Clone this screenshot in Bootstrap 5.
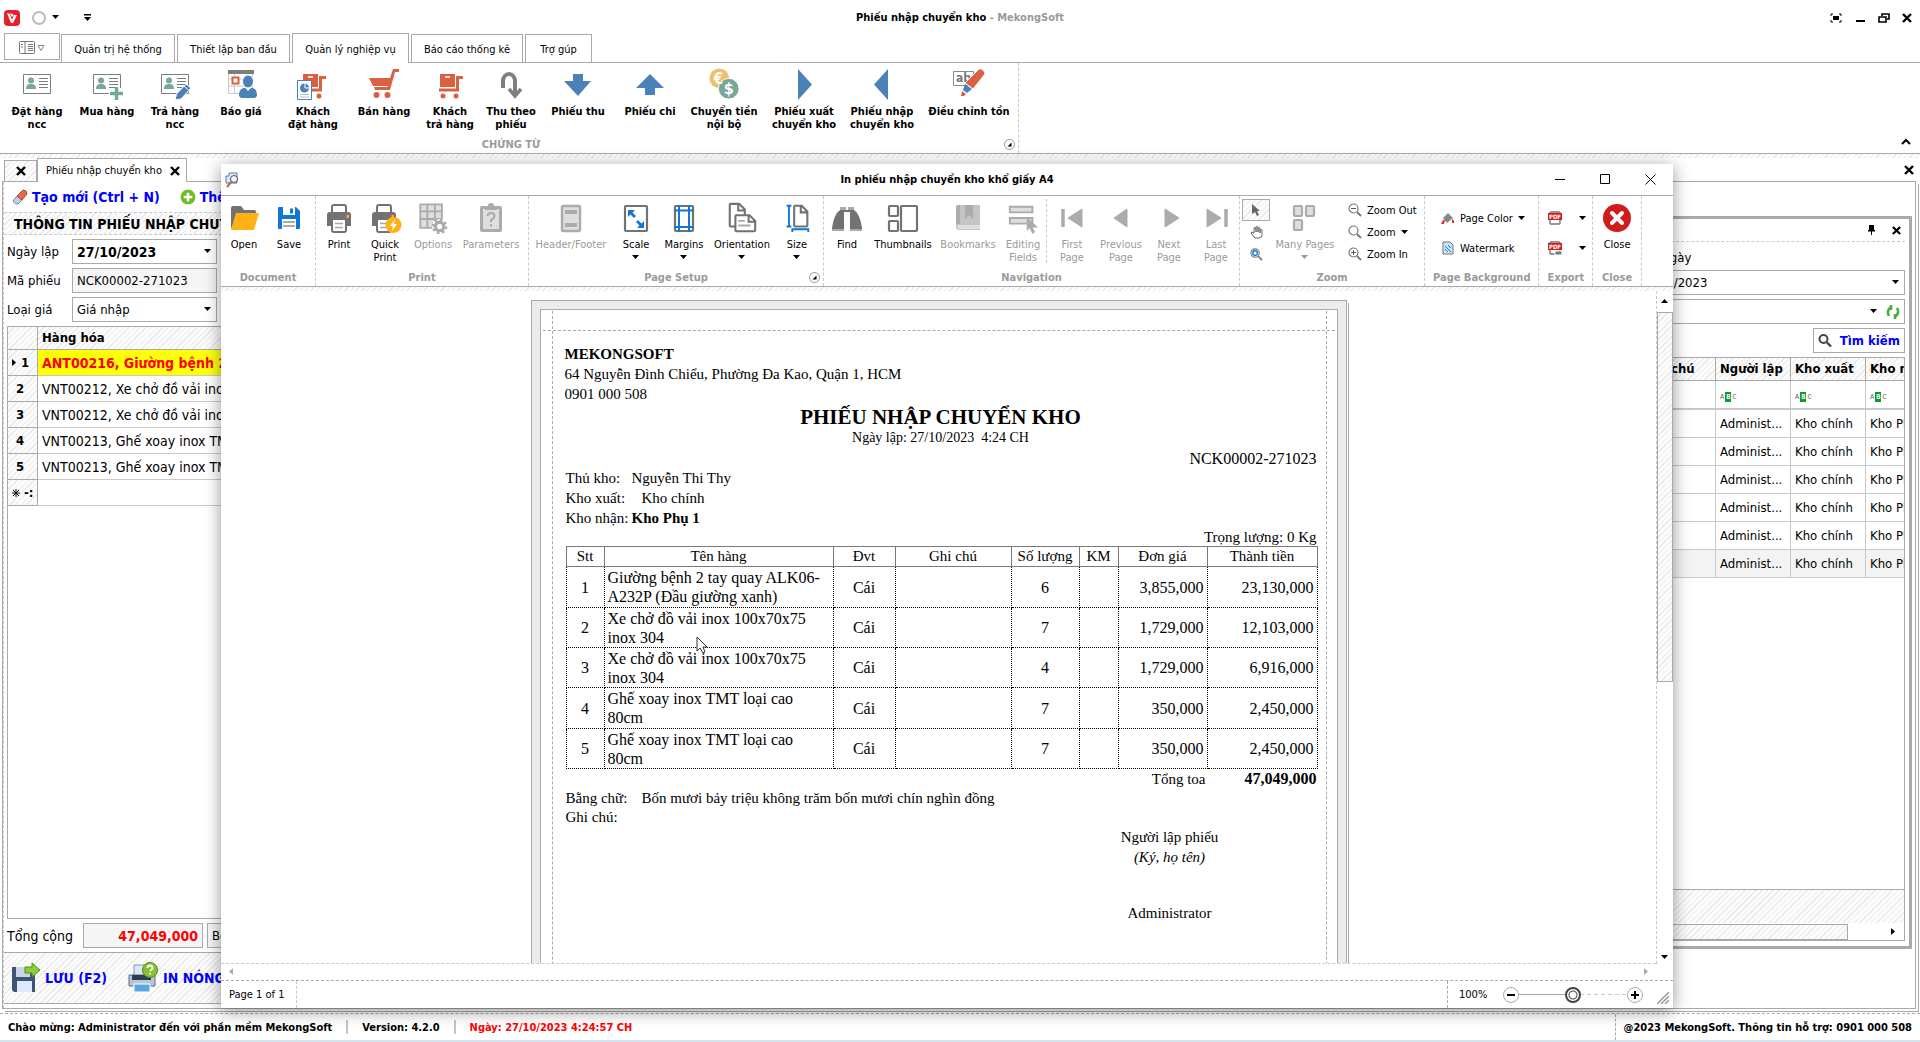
<!DOCTYPE html>
<html lang="vi">
<head>
<meta charset="utf-8">
<meta name="viewport" content="width=device-width, initial-scale=1">
<title>Phiếu nhập chuyển kho - MekongSoft</title>
<link href="https://cdn.jsdelivr.net/npm/bootstrap@5.3.0/dist/css/bootstrap.min.css" rel="stylesheet">
<style>
:root{--ln:#a9a9a9;--dash:#c9c9c9;--off:#9a9a9a;--hatch:repeating-linear-gradient(-45deg,#fcfcfc 0 3px,#e9e9e9 3px 4px)}
body{font-family:"DejaVu Sans Condensed","Noto Sans",sans-serif;font-size:11px;line-height:13px;color:#000;background:#fff;overflow:hidden}
button{font:inherit;color:inherit;background:none;border:0;padding:0}
svg{display:block;flex:none}
input,select{font:inherit;color:inherit}
.fs13{font-size:13px;line-height:16px}
.fs14{font-size:14px;line-height:16px}
.blue{color:#00f}.red{color:#f00}
.hatch{background:var(--hatch)}
.bx{border:1px solid var(--ln)}
.dim{color:var(--off)}
.dashR{border-right:1px dashed var(--dash)}
.strip5{height:4px;flex:none}
/* main window */
.topbar{height:32px;padding-top:3px}
.tabrow{height:31px;border-bottom:1px solid var(--ln)}
.tabrow button{height:28px;border:1px solid var(--ln);border-bottom:0;margin-right:2px;padding-top:2px}
.tabrow .appbtn{height:27px;width:56px;border-bottom:1px solid var(--ln);margin-bottom:2px;margin-right:1px}
.tabrow .cur{height:30px;margin-bottom:-1px;background:#fff;position:relative}
.ribbon{height:91px;border-bottom:1px solid var(--ln)}
.rb{display:flex;flex-direction:column;align-items:center;text-align:center;padding-top:5px;flex:none}
.rb svg{margin-bottom:5px}
.cap{font-weight:700;color:var(--off);text-align:center;height:15px;position:relative}
.launch{position:absolute;right:3px;top:1px}
.w44{width:44px}.w46{width:46px}.w48{width:48px}.w50{width:50px}.w58{width:58px}.w62{width:62px}.w64{width:64px}.w66{width:66px}.w68{width:68px}.w70{width:70px}.w74{width:74px}.w76{width:76px}.w80{width:80px}.w84{width:84px}.w98{width:98px}.w28{width:28px}
.docs{height:23px}
.doctab{border:1px solid var(--ln);border-bottom:0}
.doctab.one{width:33px;height:21px}
.doctab.two{width:150px;height:24px;margin-bottom:-1px;background:#fff;z-index:1;padding:0 6px 0 8px}
.closeall{padding:0 6px 6px 0}
.desk{margin:0 4px 33px 2px;border:1px solid var(--ln);box-shadow:2px 2px 0 #fff,3px 3px 0 var(--ln)}
.leftpane{border-left:1px dashed var(--dash)}
.tools{height:30px}
.sect{height:23px;border-top:1px dashed var(--dash);border-bottom:1px dashed var(--dash);padding-left:10px;font-weight:700}
.inset{margin-left:3px}
.frow{height:25px;margin-bottom:4px}
.frow label{width:65px}
.ctl{height:25px;border:1px solid var(--ln);border-radius:0;background:#fff;padding:0 4px;outline:0;appearance:none;min-width:0}
.w145{width:145px}
.ctl.ro{background:#f5f5f5}
.caret{position:absolute;right:5px;top:10px;pointer-events:none}
table{border-collapse:separate;border-spacing:0;table-layout:fixed;width:100%}
.lgrid{border:1px solid var(--ln)}
.lgrid td,.lgrid th{height:26px;padding:0 4px;border-bottom:1px solid var(--dash);white-space:nowrap;overflow:hidden}
.lgrid td{font-size:14px}
.lgrid thead th{height:23px;background:var(--hatch);border-bottom:1px solid var(--ln)}
.lgrid .no{background:var(--hatch);border-right:1px solid var(--ln);border-bottom:1px solid var(--ln);font-weight:700;font-size:13px}
.lgrid .hot{background:linear-gradient(90deg,#ff0,#ffff70);color:#f00;font-weight:700}
.sumrow{margin:4px 0 4px 3px}
.btm{height:52px;flex:none;border-top:1px solid var(--ln);border-bottom:1px solid var(--ln);margin-left:-1px;margin-bottom:4px}
.rightpane{width:554px;margin:34px 3px 59px 0;border:3px solid var(--ln);background:#fff;padding:0 4px 5px}
.rhead{height:23px;border-bottom:1px dashed var(--dash)}
.rgrid{border:1px solid var(--ln)}
.rgrid td,.rgrid th{height:28px;padding:0 4px;border-right:1px solid var(--dash);border-bottom:1px solid var(--dash);white-space:nowrap;overflow:hidden}
.rgrid th{height:23px;background:var(--hatch);border-color:var(--ln)}
.rgrid .flt td{border-bottom:2px solid var(--dash);height:29px}
.rgrid td:last-child,.rgrid th:last-child{border-right:0;padding-right:0}
.rgrid .alt td{background:#f3f3f3}
.abc{font:7px/9px "Liberation Mono",monospace;color:#666}
.abc b{background:#0a9a2a;color:#fff;padding:1px;margin:0 1px}
.status{height:27px;border-top:1px dashed var(--ln);font-weight:700}
.status i{width:2px;height:14px;background:linear-gradient(90deg,#a9c7e0 50%,#d8c8a9 50%);margin:0 14px}
.edge{height:2px;background:#d3e4ed}
/* preview window */
.preview{position:absolute;left:221px;right:247px;top:164px;bottom:34px;background:#fff;box-shadow:0 3px 16px rgba(0,0,0,.42);z-index:5}
.ptitle{height:32px;flex:none;border-bottom:1px solid var(--ln)}
.ptb{gap:34px;padding-right:17px}
.pribbon{height:91px;flex:none;border-bottom:1px solid var(--ln)}
.pg{display:flex;flex-direction:column;justify-content:space-between;padding-top:3px}
.pg .rb{padding-top:3px}
.pg .rb svg.ic{margin-bottom:4px}
.sm{height:22px;display:flex;align-items:center;gap:5px}
.sm.pick{border:1px solid var(--ln);justify-content:center}
.zcol{padding-left:2px}
.navsep{height:64px}
.pbody{flex:1 1 0;min-height:0}
.canvas{border-bottom:1px dashed var(--dash);overflow:hidden}
.mat{width:816px;margin:9px auto 0;height:1200px;border:1px solid var(--ln);background:#ececec;padding:8px;box-shadow:1px 2px 0 #fff,2px 3px 0 var(--ln)}
.paper{position:relative;height:100%;background:#fff;border:1px solid var(--ln);padding:34px 20px 0 24px;font-family:"Liberation Serif",serif;font-size:15px;line-height:20px}
.paper:before{content:"";position:absolute;inset:1px 10px 0 11px;border-left:1px dashed var(--ln);border-right:1px dashed var(--ln)}
.paper:after{content:"";position:absolute;left:2px;right:2px;top:20px;border-top:1px dashed var(--ln)}
.paper p{margin:0}
.t21{font-size:21px;line-height:26px}
.paper .t14{font-size:14px;line-height:16px}
.t16{font-size:16px;line-height:19px}
.docno{padding-top:3px}
.weight{line-height:18px}
.info{margin-left:1px}
.words{line-height:19px}
.info dt{font-weight:400;width:66px}
.info dt.wide{width:76px}
.info dd{margin:0}
.bill{width:751px;margin-left:1px;font-size:16px;line-height:19px;border-collapse:collapse}
.bill th{font-weight:400;font-size:15px;height:20px;line-height:19px;border:1px solid #7a7a7a;text-align:center;padding:0}
.bill td{border:1px dotted #000;height:40px;text-align:center;padding:0 3px}
.bill tbody tr:nth-child(3n+1) td{height:41px}
.bill td:nth-child(2){text-align:left}
.bill td:nth-child(n+7){text-align:right}
.sign{width:200px;margin-left:505px;text-align:center}
.signgap{height:36px}
.sumk{width:641px}
.vbar{width:17px;border-left:1px dashed var(--dash)}
.vthumb{height:370px;border:1px solid var(--ln);background:var(--hatch);margin-left:-1px}
.hbar{height:17px;flex:none;border-bottom:1px dashed var(--ln)}
.pstat{height:27px;flex:none}
.zlab{width:47px;padding-left:3px}
.grip{margin:0 4px 4px 14px}
.zoomr{appearance:none;width:108px;height:16px;background:none;margin:0}
.zoomr::-webkit-slider-runnable-track{height:16px;background:linear-gradient(var(--ln),var(--ln)) 0 50%/50% 1px no-repeat,repeating-linear-gradient(90deg,var(--dash) 0 4px,#fff 4px 7px) 100% 50%/50% 1px no-repeat}
.zoomr::-webkit-slider-thumb{appearance:none;width:16px;height:16px;border-radius:50%;border:2px solid #444;background:radial-gradient(circle,#fff 3px,#444 4px,#fff 5px)}
.round{width:16px;height:16px;border:1px solid #aaa;border-radius:50%;background:#fff;display:flex;align-items:center;justify-content:center}
.cursor{position:absolute;left:475px;top:472px;z-index:6}
</style>
</head>
<body>
<svg width="0" height="0" class="position-absolute">
<defs>
<symbol id="dn" viewBox="0 0 8 5"><path d="M0 0h7L3.500 4z"/></symbol>
<symbol id="up" viewBox="0 0 8 5"><path d="M0 4h7L3.500 0z"/></symbol>
<symbol id="rt" viewBox="0 0 5 8"><path d="M0 0v7l4-3.500z"/></symbol>
<symbol id="lf" viewBox="0 0 5 8"><path d="M4 0v7L0 3.500z"/></symbol>
<symbol id="xx" viewBox="0 0 10 10"><path d="M1 1l8 8M9 1l-8 8" stroke="#000" stroke-width="2.400"/></symbol>
<symbol id="lau" viewBox="0 0 11 11"><circle cx="5.500" cy="5.500" r="5" fill="#fff" stroke="#999"/><path d="M3.500 7.500h4v-4z"/></symbol>
<symbol id="card1" viewBox="0 0 32 32"><path d="M2.500 6.500h27v19h-27z" fill="#fff" stroke="#7d7d7d"/><circle cx="10" cy="12.500" r="3" fill="#77a797"/><path d="M5 21c0-4 2-5 5-5s5 1 5 5z" fill="#77a797"/><path d="M18 10.500h9M18 13.500h9M18 16.500h9M18 19.500h9" stroke="#7d7d7d"/></symbol>
<symbol id="card2" viewBox="0 0 32 32"><use href="#card1" width="32" height="32"/><path d="M18 20h14v12H18z" fill="#fff"/><path d="M25.500 19v13M19 25.500h13" stroke="#77a797" stroke-width="3.500"/></symbol>
<symbol id="card3" viewBox="0 0 32 32"><use href="#card1" width="32" height="32"/><path d="M16 32l1.500-6L27 16l5 4-10 11z" fill="#4a81b8" stroke="#fff"/><path d="M25 18l4.500 4" stroke="#fff"/></symbol>
<symbol id="quote" viewBox="0 0 32 32"><path d="M3.500 4.500h24v21h-24zM3.500 11h24M3.500 18h24M9.500 4v22M21.500 4v22" fill="#fff" stroke="#c8c8c8"/><path d="M3 2h26v4H3z" fill="#7d7d7d"/><path d="M7.500 9.500h6v6h-6z" fill="#fff" stroke="#d96041" stroke-width="2"/><ellipse cx="23" cy="13.500" rx="5.500" ry="6.500" fill="#4a81b8" stroke="#fff"/><path d="M14 28c0-7 3-8 6-8l3 3 3-3c3 0 6 1 6 8l-2 2H16z" fill="#4a81b8"/></symbol>
<symbol id="cart" viewBox="0 0 32 32"><path d="M1 10h21l3-9h6v3h-4l-5 18H7l-1-3h13l1-1H5z" fill="#d96041"/><circle cx="8.500" cy="27" r="3" fill="#d96041"/><circle cx="19.500" cy="27" r="3" fill="#d96041"/></symbol>
<symbol id="truck" viewBox="0 0 32 32"><path d="M6 6h15v13H6z" fill="#d96041"/><path d="M11 9h5" stroke="#fff" stroke-width="1.500"/><path d="M5 22h18.500V9.500H29" fill="none" stroke="#d96041" stroke-width="3"/><circle cx="9" cy="28" r="2.500" fill="#d96041"/><circle cx="22" cy="28" r="2.500" fill="#d96041"/></symbol>
<symbol id="order" viewBox="0 0 32 32"><use href="#truck" width="32" height="32"/><path d="M.5 12.500h14v19H.5z" fill="#fff" stroke="#4a81b8"/><circle cx="7.500" cy="20" r="4.500" fill="#4a81b8"/><path d="M8 15v5h5" fill="none" stroke="#fff"/><path d="M3 26.500h9M3 29h9" stroke="#bbb"/></symbol>
<symbol id="turn" viewBox="0 0 32 32"><path d="M8 20v-7a6 7 0 0 1 12 0v13" fill="none" stroke="#808080" stroke-width="4"/><path d="M14 21l6 7 6-7" fill="none" stroke="#808080" stroke-width="3.500"/></symbol>
<symbol id="adn" viewBox="0 0 32 32"><path d="M11 6h10v7h8L16 28 2 13h9z" fill="#4a81b8"/></symbol>
<symbol id="aup" viewBox="0 0 32 32"><path d="M11 27h10v-7h9L16 6 2 20h9z" fill="#4a81b8"/></symbol>
<symbol id="art" viewBox="0 0 32 32"><path d="M10 1v31l14-15.500z" fill="#4a81b8"/></symbol>
<symbol id="alf" viewBox="0 0 32 32"><path d="M22 1v31L8 16.500z" fill="#4a81b8"/></symbol>
<symbol id="coins" viewBox="0 0 34 34"><circle cx="12" cy="11" r="10.500" fill="#ecc16b"/><circle cx="22" cy="22" r="11" fill="#77a797" stroke="#fff"/><text x="11" y="17" font-size="16" font-weight="700" fill="#fff" text-anchor="middle">€</text><text x="22" y="28" font-size="17" font-weight="700" fill="#fff" text-anchor="middle">$</text></symbol>
<symbol id="mark1" viewBox="0 0 32 32"><path d="M.5 3.500h20v14H.5z" fill="#fff" stroke="#888"/><text x="3" y="14" font-size="12" fill="#777">ab</text><path d="M26 1c2-1 6 2 6 5L20 21l-8-6z" fill="#d96041" stroke="#fff"/><path d="M12 16l7 5-5 4-4-3z" fill="#4a81b8"/><path d="M9 23l4 3-2 2H8z" fill="#d96041"/></symbol>
<!-- preview ribbon -->
<symbol id="open" viewBox="0 0 32 32"><path d="M3 27V6q0-2 2-2h8l3 4h10q2 0 2 2v3H9z" fill="#727272"/><path d="M8 11h23l-5 17H3z" fill="#ffb115"/></symbol>
<symbol id="save" viewBox="0 0 32 32"><path d="M5 6q0-1 1-1h17l4 4v17q0 1-1 1H5z" fill="#1177d7"/><path d="M10 5h12v8H10zM9 17h14v10H9z" fill="#fff"/><path d="M17 6.500h3v5h-3z" fill="#1177d7"/><path d="M10 20h12M10 24h12" stroke="#a9a9a9" stroke-width="2"/></symbol>
<symbol id="print" viewBox="0 0 32 32"><path d="M4 24V13q0-3 3-3h18q3 0 3 3v11z" fill="#727272"/><path d="M9 11V5q0-2 2-2h10q2 0 2 2v6zM9 17h14v11q0 2-2 2H11q-2 0-2-2z" fill="#fff" stroke="#727272" stroke-width="2"/><path d="M12 21.500h8M12 25.500h8" stroke="#a9a9a9" stroke-width="1.500"/><path d="M23.500 13h2.500v3h-2.500z" fill="#ffb115"/></symbol>
<symbol id="qprint" viewBox="0 0 34 32"><use href="#print" width="32" height="32"/><circle cx="25.500" cy="23" r="8" fill="#ffb115"/><path d="M27 17l-5 7h3l-1 5 5-7h-3z" fill="#fff"/></symbol>
<symbol id="opts" viewBox="0 0 32 34"><path d="M2.500 2.500h23v25h-23zM2 10h24M2 18h24M10 2v26M18 2v26" fill="#dedede" stroke="#ababab" stroke-width="2"/><circle cx="23" cy="26" r="8" fill="#fff"/><circle cx="23" cy="26" r="4.500" fill="#fff" stroke="#ababab" stroke-width="3.500"/><circle cx="23" cy="26" r="7" fill="none" stroke="#ababab" stroke-width="2.500" stroke-dasharray="2.700 2.800"/></symbol>
<symbol id="parm" viewBox="0 0 32 32"><path d="M7 4h18q2 0 2 2v22q0 2-2 2H7q-2 0-2-2V6q0-2 2-2z" fill="#ababab"/><path d="M8 7h16v20H8z" fill="#dedede"/><path d="M10 8V4h3q0-3 3-3t3 3h3v4z" fill="#ababab"/><path d="M12.500 14q0-3 3.500-3t3.500 3q0 2-3.500 4v2M16 22v2.500" fill="none" stroke="#ababab" stroke-width="2"/></symbol>
<symbol id="hf" viewBox="0 0 32 32"><rect x="7" y="4" width="18" height="25" rx="1" fill="#dedede" stroke="#ababab" stroke-width="2.400"/><path d="M10 10h12M10 23h12" stroke="#ababab" stroke-width="4"/></symbol>
<symbol id="scale" viewBox="0 0 32 32"><rect x="5" y="4" width="22" height="25" rx="1" fill="#fff" stroke="#727272" stroke-width="2.200"/><path d="M8 8h7l-2.500 2.500L16 14l-2 2-3.500-3.500L8 15zM24 26h-7l2.500-2.500L16 20l2-2 3.500 3.500L24 19z" fill="#1177d7"/></symbol>
<symbol id="marg" viewBox="0 0 32 32"><rect x="7" y="4" width="18" height="25" rx="1" fill="#fff" stroke="#727272" stroke-width="2.200"/><path d="M11 3v27M21 3v27M6 8.500h20M6 25h20" stroke="#1177d7" stroke-width="2" fill="none"/></symbol>
<symbol id="orient" viewBox="0 0 32 34"><path d="M3 25V3q0-1 1-1h9l6 6v17q0 1-1 1H4q-1 0-1-1zM12 2v7h7" fill="#fff" stroke="#727272" stroke-width="2.200"/><path d="M9 30V15q0-1 1-1h14l6 6v10q0 1-1 1H10q-1 0-1-1zM23 14v7h7" fill="#fff" stroke="#727272" stroke-width="2.200"/><path d="M12 20h7M12 25h13" stroke="#a9a9a9" stroke-width="2"/></symbol>
<symbol id="size" viewBox="0 0 32 34"><path d="M5 4h5M5 26h5M7.500 4v22M11 32v-3h17v3" fill="none" stroke="#1177d7" stroke-width="2"/><path d="M13 25V5q0-1 1-1h7l6 6v15q0 1-1 1H14q-1 0-1-1zM20 4v7h7" fill="#fff" stroke="#727272" stroke-width="2.200"/></symbol>
<symbol id="find" viewBox="0 0 32 32"><path d="M9 5h6v3h2V5h6v3q6 4 8 18v3H19V10h-6v19H1v-3Q3 12 9 8z" fill="#727272"/><path d="M9 5h6v3H9zM17 5h6v3h-6zM1 27h12v2H1zM19 27h12v2H19z" fill="#a9a9a9"/></symbol>
<symbol id="thumb" viewBox="0 0 32 32"><rect x="2" y="4" width="9" height="10" rx="1" fill="#fff" stroke="#727272" stroke-width="2.200"/><rect x="2" y="19" width="9" height="10" rx="1" fill="#fff" stroke="#727272" stroke-width="2.200"/><rect x="14" y="4" width="16" height="25" rx="1" fill="#fff" stroke="#727272" stroke-width="2.200"/></symbol>
<symbol id="book" viewBox="0 0 32 32"><path d="M4 5q0-2 2-2h22v25H7q-3 0-3-3z" fill="#c4c4c4"/><path d="M4 5q0-2 2-2h2v19H4zM13 3h8v14l-4-4-4 4z" fill="#ababab"/><path d="M6 23h22v4H7q-2-2-1-4z" fill="#dedede"/></symbol>
<symbol id="edit" viewBox="0 0 32 34"><path d="M2 5h24v6H2zM2 17h24v6H2z" fill="#dedede" stroke="#ababab" stroke-width="2"/><path d="M20 16l12 11h-6l3 5-3 2-3-6-3 3z" fill="#ababab"/></symbol>
<symbol id="first" viewBox="0 0 32 32"><path d="M26 7v18L12 16z" fill="#ababab" stroke="#ababab" stroke-linejoin="round"/><path d="M7 7v18" stroke="#ababab" stroke-width="3.500"/></symbol>
<symbol id="prev" viewBox="0 0 32 32"><path d="M22 7v18L9 16z" fill="#ababab" stroke="#ababab" stroke-linejoin="round"/></symbol>
<symbol id="next" viewBox="0 0 32 32"><path d="M12 7v18l14-9z" fill="#ababab" stroke="#ababab" stroke-linejoin="round"/></symbol>
<symbol id="last" viewBox="0 0 32 32"><path d="M7 7v18l14-9z" fill="#ababab" stroke="#ababab" stroke-linejoin="round"/><path d="M26 7v18" stroke="#ababab" stroke-width="3.500"/></symbol>
<symbol id="many" viewBox="0 0 32 32"><g fill="#dedede" stroke="#ababab" stroke-width="2.200"><rect x="5" y="4" width="8" height="10" rx="1"/><rect x="17" y="4" width="8" height="10" rx="1"/><rect x="5" y="18" width="8" height="10" rx="1"/></g></symbol>
<symbol id="mag" viewBox="0 0 14 14"><circle cx="5.500" cy="5.500" r="4.500" fill="#fff" stroke="#777" stroke-width="1.200"/><path d="M9 9l4 4" stroke="#777" stroke-width="1.800"/></symbol>
<symbol id="closer" viewBox="0 0 32 32"><circle cx="16" cy="16" r="14" fill="#d11c1c"/><path d="M11 11l10 10M21 11L11 21" stroke="#fff" stroke-width="4" stroke-linecap="round"/></symbol>
<symbol id="pdf" viewBox="0 0 16 16"><rect x="3" y="2" width="10" height="12" rx="1" fill="#fff" stroke="#777" stroke-width="1.400"/><path d="M1 3h14v7H1z" fill="#d11c1c"/><text x="8" y="9" font-size="6" font-weight="700" fill="#fff" text-anchor="middle">PDF</text></symbol>
</defs>
</svg>

<div class="vh-100 d-flex flex-column">
<header>
  <div class="topbar d-flex align-items-center position-relative">
    <svg class="ms-1" width="16" height="16" viewBox="0 0 16 16"><rect width="16" height="16" rx="4" fill="#e8202a"/><path d="M3 3l3 1 2 6 2-5h3l-4 8H7z" fill="#fff"/><path d="M6 3l4 2-2 2z" fill="#fff"/></svg>
    <svg class="ms-2" width="20" height="14" viewBox="0 0 20 14"><circle cx="11" cy="7" r="6" fill="none" stroke="#bbb" stroke-width="2"/></svg>
    <svg class="ms-1" width="8" height="5"><use href="#dn"/></svg>
    <svg class="ms-4" width="8" height="8" viewBox="0 0 8 8"><path d="M0 0h7v1.500H0zM0 3h7L3.500 7z"/></svg>
    <div class="position-absolute start-50 translate-middle-x fw-bold text-nowrap">Phiếu nhập chuyển kho <span class="dim">- MekongSoft</span></div>
    <div class="ms-auto d-flex align-items-center gap-2 pe-2">
      <button aria-label="Toàn màn hình"><svg width="12" height="10" viewBox="0 0 12 10"><path d="M1 3V1h2M9 1h2v2M11 7v2H9M3 9H1V7" fill="none" stroke="#000"/><path d="M3 3h6v4H3z"/></svg></button>
      <button aria-label="Thu nhỏ" class="ms-1"><svg width="12" height="10" viewBox="0 0 12 10"><path d="M2 8h9" stroke="#000" stroke-width="2"/></svg></button>
      <button aria-label="Khôi phục" class="ms-1"><svg width="12" height="10" viewBox="0 0 12 10"><path d="M4 3V1h7v5H9" fill="none" stroke="#000" stroke-width="1.600"/><path d="M1 4h7v5H1z" fill="none" stroke="#000" stroke-width="1.600"/></svg></button>
      <button aria-label="Đóng" class="ms-1"><svg width="10" height="10"><use href="#xx"/></svg></button>
    </div>
  </div>
  <nav class="tabrow d-flex align-items-end ps-1">
    <button class="appbtn d-flex align-items-center justify-content-center" aria-label="Menu"><svg width="26" height="14" viewBox="0 0 26 14"><rect x=".5" y=".5" width="15" height="12" rx="1" fill="#fff" stroke="#777"/><path d="M6 0v13M9 3.500h5M9 5.500h5M9 7.500h5M9 9.500h5M2 3.500h2M2 6h2" stroke="#777"/><path d="M19 4.500h6l-3 5z" fill="#fff" stroke="#888"/></svg></button>
    <button style="width:114px">Quản trị hệ thống</button>
    <button style="width:113px">Thiết lập ban đầu</button>
    <button class="cur" style="width:117px">Quản lý nghiệp vụ</button>
    <button style="width:112px">Báo cáo thống kê</button>
    <button style="width:67px">Trợ gúp</button>
  </nav>
  <div class="ribbon d-flex">
    <div class="d-flex flex-column justify-content-between dashR ps-1">
      <div class="d-flex fw-bold">
        <button class="rb w66"><svg width="32" height="32"><use href="#card1"/></svg>Đặt hàng<br>ncc</button>
        <button class="rb w74"><svg width="32" height="32"><use href="#card2"/></svg>Mua hàng</button>
        <button class="rb w62"><svg width="32" height="32"><use href="#card3"/></svg>Trả hàng<br>ncc</button>
        <button class="rb w70"><svg width="32" height="32"><use href="#quote"/></svg>Báo giá</button>
        <button class="rb w74"><svg width="32" height="32"><use href="#order"/></svg>Khách<br>đặt hàng</button>
        <button class="rb w68"><svg width="32" height="32"><use href="#cart"/></svg>Bán hàng</button>
        <button class="rb w64"><svg width="32" height="32"><use href="#truck"/></svg>Khách<br>trả hàng</button>
        <button class="rb w58"><svg width="32" height="32"><use href="#turn"/></svg>Thu theo<br>phiếu</button>
        <button class="rb w76"><svg width="32" height="32"><use href="#adn"/></svg>Phiếu thu</button>
        <button class="rb w68"><svg width="32" height="32"><use href="#aup"/></svg>Phiếu chi</button>
        <button class="rb w80"><svg width="32" height="32"><use href="#coins"/></svg>Chuyển tiền<br>nội bộ</button>
        <button class="rb w80"><svg width="32" height="32"><use href="#art"/></svg>Phiếu xuất<br>chuyển kho</button>
        <button class="rb w76"><svg width="32" height="32"><use href="#alf"/></svg>Phiếu nhập<br>chuyển kho</button>
        <button class="rb w98"><svg width="32" height="32"><use href="#mark1"/></svg>Điều chỉnh tồn</button>
      </div>
      <div class="cap">CHỨNG TỪ<button class="launch" aria-label="Tùy chọn"><svg width="11" height="11"><use href="#lau"/></svg></button></div>
    </div>
    <button class="ms-auto align-self-end me-2 mb-2" aria-label="Thu gọn"><svg width="12" height="7" viewBox="0 0 12 7"><path d="M2 6l4-4 4 4" fill="none" stroke="#000" stroke-width="2"/></svg></button>
  </div>
</header>
<div class="strip5 hatch"></div>
<div class="docs d-flex align-items-end ps-1">
  <div class="doctab one hatch d-flex align-items-center justify-content-center"><button aria-label="Đóng"><svg width="10" height="10"><use href="#xx"/></svg></button></div>
  <div class="doctab two d-flex align-items-center justify-content-between text-nowrap">Phiếu nhập chuyển kho<button aria-label="Đóng tab"><svg width="10" height="10"><use href="#xx"/></svg></button></div>
  <button class="closeall ms-auto" aria-label="Đóng trang"><svg width="10" height="10"><use href="#xx"/></svg></button>
</div>
<main class="desk flex-grow-1 d-flex fs13 overflow-visible">
  <section class="leftpane flex-grow-1 d-flex flex-column overflow-hidden">
    <div class="tools d-flex align-items-center fw-bold blue text-nowrap fs14">
      <button class="d-flex align-items-center gap-1 ps-2 pe-2 me-1"><svg width="16" height="16" viewBox="0 0 16 16"><path d="M1 12l4-5 5 4-4 4q-3 1-5-3z" fill="#bcd3ea" stroke="#6d87a8"/><path d="M5 7l6-6q4 0 4 4l-5 6z" fill="#e36a4a" stroke="#a34c3c"/></svg>Tạo mới (Ctrl + N)</button>
      <button class="d-flex align-items-center gap-1 ps-2"><svg width="16" height="16" viewBox="0 0 15 15"><circle cx="7.500" cy="7.500" r="7" fill="#6cbf26"/><path d="M7.500 3.500v8M3.500 7.500h8" stroke="#fff" stroke-width="2.400"/></svg>Thêm hàng</button>
    </div>
    <div class="sect hatch d-flex align-items-center text-nowrap fs14">THÔNG TIN PHIẾU NHẬP CHUYỂN KHO</div>
    <div class="inset pt-1">
      <div class="frow d-flex align-items-center"><label for="d1">Ngày lập</label><div class="position-relative"><input id="d1" class="ctl w145 fw-bold fs14" value="27/10/2023"><svg class="caret" width="8" height="5"><use href="#dn"/></svg></div></div>
      <div class="frow d-flex align-items-center"><label for="d2">Mã phiếu</label><input id="d2" class="ctl ro w145" value="NCK00002-271023" readonly></div>
      <div class="frow d-flex align-items-center"><label for="d3">Loại giá</label><div class="position-relative"><select id="d3" class="ctl w145"><option>Giá nhập</option></select><svg class="caret" width="8" height="5"><use href="#dn"/></svg></div></div>
    </div>
    <div class="lgrid flex-grow-1 inset overflow-hidden">
      <table>
        <colgroup><col style="width:30px"><col></colgroup>
        <thead><tr><th class="no"></th><th>Hàng hóa</th></tr></thead>
        <tbody>
          <tr><td class="no"><div class="d-flex align-items-center gap-1"><svg width="5" height="8"><use href="#rt"/></svg>1</div></td><td class="hot">ANT00216, Giường bệnh 2 tay quay ALK06-A232P</td></tr>
          <tr><td class="no ps-2">2</td><td>VNT00212, Xe chở đồ vải inox 100x70x75 inox 304</td></tr>
          <tr><td class="no ps-2">3</td><td>VNT00212, Xe chở đồ vải inox 100x70x75 inox 304</td></tr>
          <tr><td class="no ps-2">4</td><td>VNT00213, Ghế xoay inox TMT loại cao 80cm</td></tr>
          <tr><td class="no ps-2">5</td><td>VNT00213, Ghế xoay inox TMT loại cao 80cm</td></tr>
          <tr><td class="no"><div class="d-flex align-items-center gap-1"><svg width="8" height="8" viewBox="0 0 8 8"><path d="M4 0v8M0 4h8M1 1l6 6M7 1L1 7" stroke="#000"/></svg>-:</div></td><td></td></tr>
        </tbody>
      </table>
    </div>
    <div class="sumrow d-flex align-items-center text-nowrap">
      <label for="sum" class="w76 fs14">Tổng cộng</label>
      <input id="sum" class="ctl ro fw-bold red text-end fs14" style="width:120px" value="47,049,000" readonly>
      <input class="ctl ro ms-1 flex-grow-1" aria-label="Bằng chữ" value="Bốn mươi bảy triệu không trăm bốn mươi chín nghìn đồng" readonly>
    </div>
    <div class="btm hatch d-flex align-items-center fw-bold blue text-nowrap fs14">
      <button class="d-flex align-items-center gap-1 ps-2 pe-1"><svg width="30" height="32" viewBox="0 0 30 32"><path d="M1 5h23v25H3l-2-2z" fill="#3d5474"/><path d="M5 5h14v10H5z" fill="#c9d6e6"/><path d="M6 19h15v11H6z" fill="#dcebf7"/><path d="M14 5h7V1l8 7-8 7v-4h-7z" fill="#8fce3a" stroke="#4f8a17"/></svg>LƯU (F2)</button>
      <button class="d-flex align-items-center gap-1 ps-2 ms-2"><svg width="32" height="32" viewBox="0 0 32 32"><path d="M7 3h14v12H7z" fill="#dbe8f5" stroke="#7f99b8"/><path d="M2 13h26v11H2z" fill="#b9c6d5" stroke="#5b6d84"/><path d="M5 13h19v5H5z" fill="#2c3c52"/><path d="M7 22h16v8H7z" fill="#5aa7e0" stroke="#fff"/><circle cx="23" cy="8" r="7.500" fill="#86c232" stroke="#4f8a17"/><path d="M20.500 6q0-2.500 2.500-2.500T25.500 6q0 1.500-2.500 3M23 11v1.500" fill="none" stroke="#fff" stroke-width="1.800"/></svg>IN NÓNG (F3)</button>
    </div>
  </section>
  <aside class="rightpane flex-shrink-0 d-flex flex-column">
    <div class="rhead d-flex align-items-center justify-content-end gap-3 pe-1"><button aria-label="Ghim"><svg width="9" height="10" viewBox="0 0 9 10"><path d="M2 0h5v5h1v1.500H5V10H4V6.500H1V5h1z"/></svg></button><button aria-label="Đóng bảng"><svg width="9" height="9"><use href="#xx"/></svg></button></div>
    <div class="row g-0 pt-2">
      <div class="col-6"><label for="f1" class="d-block mb-1">Từ ngày</label><input id="f1" class="ctl w-100" value="01/10/2023"></div>
      <div class="col-6"><label for="f2" class="d-block mb-1">Đến ngày</label><div class="position-relative"><input id="f2" class="ctl w-100" value="27/10/2023"><svg class="caret" width="8" height="5"><use href="#dn"/></svg></div></div>
    </div>
    <div class="position-relative mt-1"><select class="ctl w-100 d-block" aria-label="Kho"><option></option></select>
      <div class="caret d-flex align-items-center gap-2 top-0 h-100"><svg width="8" height="5"><use href="#dn"/></svg><svg width="14" height="14" viewBox="0 0 14 14"><path d="M3 11Q0 6 5 2M5 0v5M11 3q3 5-2 9M9 14V9" fill="none" stroke="#4caf3f" stroke-width="2.600"/></svg></div></div>
    <div class="text-end d-flex justify-content-end my-1"><button class="bx hatch ctl d-flex align-items-center gap-1 fw-bold blue"><svg width="18" height="15" viewBox="0 0 18 14"><circle cx="5.500" cy="5.500" r="4" fill="none" stroke="#444" stroke-width="2"/><path d="M9 9l4 4" stroke="#444" stroke-width="2.400"/></svg>Tìm kiếm</button></div>
    <div class="rgrid flex-grow-1 d-flex flex-column justify-content-between">
      <table>
        <colgroup><col><col style="width:75px"><col style="width:75px"><col style="width:75px"><col style="width:38px"></colgroup>
        <thead><tr><th>Mã phiếu</th><th>Ghi chú</th><th>Người lập</th><th>Kho xuất</th><th>Kho nhận</th></tr></thead>
        <tbody>
          <tr class="flt"><td></td><td></td><td><span class="abc">A<b>B</b>C</span></td><td><span class="abc">A<b>B</b>C</span></td><td><span class="abc">A<b>B</b>C</span></td></tr>
          <tr><td></td><td></td><td>Administ...</td><td>Kho chính</td><td>Kho Phụ 1</td></tr>
          <tr><td></td><td></td><td>Administ...</td><td>Kho chính</td><td>Kho Phụ 1</td></tr>
          <tr><td></td><td></td><td>Administ...</td><td>Kho chính</td><td>Kho Phụ 1</td></tr>
          <tr><td></td><td></td><td>Administ...</td><td>Kho chính</td><td>Kho Phụ 1</td></tr>
          <tr><td></td><td></td><td>Administ...</td><td>Kho chính</td><td>Kho Phụ 1</td></tr>
          <tr class="alt"><td></td><td></td><td>Administ...</td><td>Kho chính</td><td>Kho Phụ 1</td></tr>
        </tbody>
      </table>
      <div>
        <div class="hatch" style="height:34px;border-top:1px solid var(--ln)"></div>
        <div class="d-flex align-items-center justify-content-between pe-2" style="height:17px"><div class="hatch bx" style="width:91%;height:16px"></div><svg width="5" height="8"><use href="#rt"/></svg></div>
      </div>
    </div>
  </aside>
</main>
</div>
<footer class="position-absolute bottom-0 start-0 end-0">
  <div class="status d-flex align-items-center bg-white text-nowrap">
    <span class="ps-2">Chào mừng: Administrator đến với phần mềm MekongSoft</span><i></i><span>Version: 4.2.0</span><i></i><span class="red">Ngày: 27/10/2023 4:24:57 CH</span>
    <span class="ms-auto h-100 d-flex align-items-center ps-2 pe-2" style="border-left:1px dashed var(--ln)"><span>@2023 MekongSoft. Thông tin hỗ trợ: 0901 000 508</span></span>
  </div>
  <div class="edge"></div>
</footer>

<section class="preview d-flex flex-column" role="dialog" aria-label="In phiếu">
  <div class="ptitle d-flex align-items-center position-relative">
    <svg class="ms-1" width="14" height="16" viewBox="0 0 14 16"><path d="M1 4h3V1h8v10H1z" fill="#dfe9f6" stroke="#5878a8"/><circle cx="9" cy="7" r="3.500" fill="#eef6ff" stroke="#555"/><path d="M6.500 9.500L2 15" stroke="#a9743a" stroke-width="2"/></svg>
    <div class="position-absolute start-50 translate-middle-x fw-bold text-nowrap">In phiếu nhập chuyển kho khổ giấy A4</div>
    <div class="ptb ms-auto d-flex"><button aria-label="Thu nhỏ"><svg width="11" height="11" viewBox="0 0 11 11"><path d="M0 5.500h10" stroke="#000"/></svg></button><button aria-label="Phóng to"><svg width="11" height="11" viewBox="0 0 11 11"><path d="M.5.5h9v9h-9z" fill="none" stroke="#000"/></svg></button><button aria-label="Đóng cửa sổ"><svg width="11" height="11" viewBox="0 0 11 11"><path d="M.5.5l10 10M10.500.5l-10 10" stroke="#000"/></svg></button></div>
  </div>
  <div class="pribbon d-flex">
    <div class="pg dashR"><div class="d-flex pe-1">
      <button class="rb w46"><svg class="ic" width="32" height="32"><use href="#open"/></svg>Open</button>
      <button class="rb w44"><svg class="ic" width="32" height="32"><use href="#save"/></svg>Save</button></div>
      <div class="cap">Document</div></div>
    <div class="pg dashR"><div class="d-flex pe-1">
      <button class="rb w46"><svg class="ic" width="32" height="32"><use href="#print"/></svg>Print</button>
      <button class="rb w46"><svg class="ic" width="34" height="32"><use href="#qprint"/></svg>Quick<br>Print</button>
      <button class="rb w50 dim"><svg class="ic" width="32" height="32"><use href="#opts"/></svg>Options</button>
      <button class="rb w66 dim"><svg class="ic" width="32" height="32"><use href="#parm"/></svg>Parameters</button></div>
      <div class="cap">Print</div></div>
    <div class="pg dashR"><div class="d-flex pe-1">
      <button class="rb w84 dim"><svg class="ic" width="32" height="32"><use href="#hf"/></svg>Header/Footer</button>
      <button class="rb w46"><svg class="ic" width="32" height="32"><use href="#scale"/></svg>Scale<svg class="mt-1" width="8" height="5"><use href="#dn"/></svg></button>
      <button class="rb w50"><svg class="ic" width="32" height="32"><use href="#marg"/></svg>Margins<svg class="mt-1" width="8" height="5"><use href="#dn"/></svg></button>
      <button class="rb w66"><svg class="ic" width="32" height="32"><use href="#orient"/></svg>Orientation<svg class="mt-1" width="8" height="5"><use href="#dn"/></svg></button>
      <button class="rb w44"><svg class="ic" width="32" height="32"><use href="#size"/></svg>Size<svg class="mt-1" width="8" height="5"><use href="#dn"/></svg></button></div>
      <div class="cap">Page Setup<button class="launch" aria-label="Thiết lập trang"><svg width="11" height="11"><use href="#lau"/></svg></button></div></div>
    <div class="pg dashR"><div class="d-flex">
      <button class="rb w46"><svg class="ic" width="32" height="32"><use href="#find"/></svg>Find</button>
      <button class="rb w66"><svg class="ic" width="32" height="32"><use href="#thumb"/></svg>Thumbnails</button>
      <button class="rb w64 dim"><svg class="ic" width="32" height="32"><use href="#book"/></svg>Bookmarks</button>
      <button class="rb w46 dim"><svg class="ic" width="32" height="32"><use href="#edit"/></svg>Editing<br>Fields</button>
      <div class="dashR navsep"></div>
      <button class="rb w50 dim"><svg class="ic" width="32" height="32"><use href="#first"/></svg>First<br>Page</button>
      <button class="rb w48 dim"><svg class="ic" width="32" height="32"><use href="#prev"/></svg>Previous<br>Page</button>
      <button class="rb w48 dim"><svg class="ic" width="32" height="32"><use href="#next"/></svg>Next<br>Page</button>
      <button class="rb w46 dim"><svg class="ic" width="32" height="32"><use href="#last"/></svg>Last<br>Page</button></div>
      <div class="cap">Navigation</div></div>
    <div class="pg dashR"><div class="zcol d-flex">
      <div class="w28">
        <button class="sm pick hatch w-100" aria-label="Con trỏ"><svg width="10" height="12" viewBox="0 0 10 12"><path d="M1 0l8 7H6l2 4-2 1-2-4-3 2z" fill="#666"/></svg></button>
        <button class="sm w-100 justify-content-center" aria-label="Bàn tay"><svg width="13" height="14" viewBox="0 0 13 14"><path d="M4 12L1 8q0-2 3 0V3q1-1 2 0V7 2q1-1 2 0v5-4q1-1 2 0v5-3q1-1 2 0v5q0 3-3 3H5z" fill="#fff" stroke="#666"/></svg></button>
        <button class="sm w-100 justify-content-center" aria-label="Kính lúp"><svg width="13" height="13" viewBox="0 0 14 14"><use href="#mag" width="14" height="14"/><circle cx="5.500" cy="5.500" r="2.500" fill="none" stroke="#1177d7" stroke-width="1.500"/></svg></button>
      </div>
      <button class="rb w70 dim"><svg class="ic" width="32" height="32"><use href="#many"/></svg>Many Pages<svg class="mt-1" width="8" height="5" fill="#9a9a9a"><use href="#dn"/></svg></button>
      <div class="ps-2 w84 text-nowrap">
        <button class="sm"><svg width="14" height="14" viewBox="0 0 14 14"><use href="#mag" width="14" height="14"/><path d="M3 5.500h5" stroke="#555"/></svg>Zoom Out</button>
        <button class="sm"><svg width="14" height="14"><use href="#mag"/></svg>Zoom<svg width="8" height="5"><use href="#dn"/></svg></button>
        <button class="sm"><svg width="14" height="14" viewBox="0 0 14 14"><use href="#mag" width="14" height="14"/><path d="M3 5.500h5M5.500 3v5" stroke="#555"/></svg>Zoom In</button>
      </div></div>
      <div class="cap">Zoom</div></div>
    <div class="pg dashR text-nowrap"><div class="ps-3 pt-2">
      <button class="sm mb-2"><svg width="14" height="12" viewBox="0 0 14 12"><path d="M2 6l5-5 5 5-6 5z" fill="#888"/><path d="M0 12q2-5 4-4l-1 4zM11 7q3 2 2 4h-2z" fill="#d33"/></svg>Page Color<svg width="8" height="5"><use href="#dn"/></svg></button>
      <button class="sm"><svg width="14" height="14" viewBox="0 0 14 14"><path d="M2 1h7l3 3v9H2z" fill="#cfe3f6" stroke="#777"/><path d="M4 5l6 6M4 8l3 3M7 4l3 3" stroke="#1177d7"/></svg>Watermark</button></div>
      <div class="cap px-2">Page Background</div></div>
    <div class="pg dashR"><div class="ps-2 pt-2">
      <button class="sm mb-2 gap-3" aria-label="Xuất PDF"><svg width="16" height="16"><use href="#pdf"/></svg><svg width="8" height="5"><use href="#dn"/></svg></button>
      <button class="sm gap-3" aria-label="Gửi PDF"><svg width="16" height="16" viewBox="0 0 16 16"><use href="#pdf" width="16" height="16"/><path d="M8 11h7v4H8z" fill="#777" stroke="#fff"/></svg><svg width="8" height="5"><use href="#dn"/></svg></button></div>
      <div class="cap px-2">Export</div></div>
    <div class="pg dashR"><button class="rb w48"><svg class="ic" width="32" height="32"><use href="#closer"/></svg>Close</button>
      <div class="cap">Close</div></div>
  </div>
  <div class="strip5 hatch"></div>
  <div class="pbody d-flex overflow-hidden">
    <div class="canvas flex-grow-1">
      <div class="mat"><article class="paper">
        <p class="fw-bold">MEKONGSOFT</p>
        <p>64 Nguyễn Đình Chiểu, Phường Đa Kao, Quận 1, HCM</p>
        <p>0901 000 508</p>
        <h1 class="t21 fw-bold text-center m-0">PHIẾU NHẬP CHUYỂN KHO</h1>
        <p class="t14 text-center">Ngày lập: 27/10/2023 &nbsp;4:24 CH</p>
        <p class="t16 text-end docno">NCK00002-271023</p>
        <dl class="info mb-0">
          <div class="d-flex"><dt>Thủ kho:</dt><dd>Nguyễn Thi Thy</dd></div>
          <div class="d-flex"><dt class="wide">Kho xuất:</dt><dd>Kho chính</dd></div>
          <div class="d-flex"><dt>Kho nhận:</dt><dd class="fw-bold">Kho Phụ 1</dd></div>
        </dl>
        <p class="text-end weight">Trọng lượng: 0 Kg</p>
        <table class="bill">
          <colgroup><col style="width:38px"><col style="width:229px"><col style="width:62px"><col style="width:116px"><col style="width:68px"><col style="width:39px"><col style="width:89px"><col style="width:110px"></colgroup>
          <thead><tr><th>Stt</th><th>Tên hàng</th><th>Đvt</th><th>Ghi chú</th><th>Số lượng</th><th>KM</th><th>Đơn giá</th><th>Thành tiền</th></tr></thead>
          <tbody>
            <tr><td>1</td><td>Giường bệnh 2 tay quay ALK06-A232P (Đầu giường xanh)</td><td>Cái</td><td></td><td>6</td><td></td><td>3,855,000</td><td>23,130,000</td></tr>
            <tr><td>2</td><td>Xe chở đồ vải inox 100x70x75 inox 304</td><td>Cái</td><td></td><td>7</td><td></td><td>1,729,000</td><td>12,103,000</td></tr>
            <tr><td>3</td><td>Xe chở đồ vải inox 100x70x75 inox 304</td><td>Cái</td><td></td><td>4</td><td></td><td>1,729,000</td><td>6,916,000</td></tr>
            <tr><td>4</td><td>Ghế xoay inox TMT loại cao 80cm</td><td>Cái</td><td></td><td>7</td><td></td><td>350,000</td><td>2,450,000</td></tr>
            <tr><td>5</td><td>Ghế xoay inox TMT loại cao 80cm</td><td>Cái</td><td></td><td>7</td><td></td><td>350,000</td><td>2,450,000</td></tr>
          </tbody>
        </table>
        <div class="d-flex justify-content-between"><span class="sumk text-end">Tổng toa</span><b class="t16">47,049,000</b></div>
        <dl class="info words mb-0">
          <div class="d-flex"><dt class="wide">Bằng chữ:</dt><dd>Bốn mươi bảy triệu không trăm bốn mươi chín nghìn đồng</dd></div>
          <div class="d-flex"><dt>Ghi chú:</dt><dd></dd></div>
        </dl>
        <div class="sign"><p>Người lập phiếu</p><p class="fst-italic">(Ký, họ tên)</p><div class="signgap"></div><p>Administrator</p></div>
      </article></div>
    </div>
    <div class="vbar d-flex flex-column align-items-center">
      <svg class="my-2" width="8" height="5"><use href="#up"/></svg><div class="vthumb w-100"></div><svg class="mt-auto mb-1" width="8" height="5"><use href="#dn"/></svg>
    </div>
  </div>
  <div class="hbar d-flex align-items-center justify-content-between ps-2 pe-4" style="fill:#aaa"><svg width="5" height="8"><use href="#lf"/></svg><svg width="5" height="8"><use href="#rt"/></svg></div>
  <div class="pstat d-flex align-items-center">
    <span class="dashR h-100 d-flex align-items-center ps-2 w76">Page 1 of 1</span>
    <div class="ms-auto h-100 d-flex align-items-center ps-2" style="border-left:1px dashed var(--ln)"><label for="zm" class="zlab">100%</label><button class="round" aria-label="Nhỏ hơn"><svg width="8" height="8" viewBox="0 0 8 8"><path d="M0 4h8" stroke="#000" stroke-width="2"/></svg></button><input id="zm" type="range" class="zoomr" value="50"><button class="round" aria-label="Lớn hơn"><svg width="8" height="8" viewBox="0 0 8 8"><path d="M0 4h8M4 0v8" stroke="#000" stroke-width="2"/></svg></button><svg class="grip align-self-end" width="12" height="12" viewBox="0 0 12 12"><path d="M0 12L12 0M4 12l8-8M8 12l4-4" stroke="#999" stroke-width="1.500"/></svg></div>
  </div>
  <svg class="cursor" width="12" height="18" viewBox="0 0 12 18"><path d="M1 1v14l3-3 3 5 2-1-2-5h4z" fill="#fff" stroke="#333"/></svg>
</section>
<script src="https://cdn.jsdelivr.net/npm/bootstrap@5.3.0/dist/js/bootstrap.bundle.min.js"></script>
</body>
</html>
